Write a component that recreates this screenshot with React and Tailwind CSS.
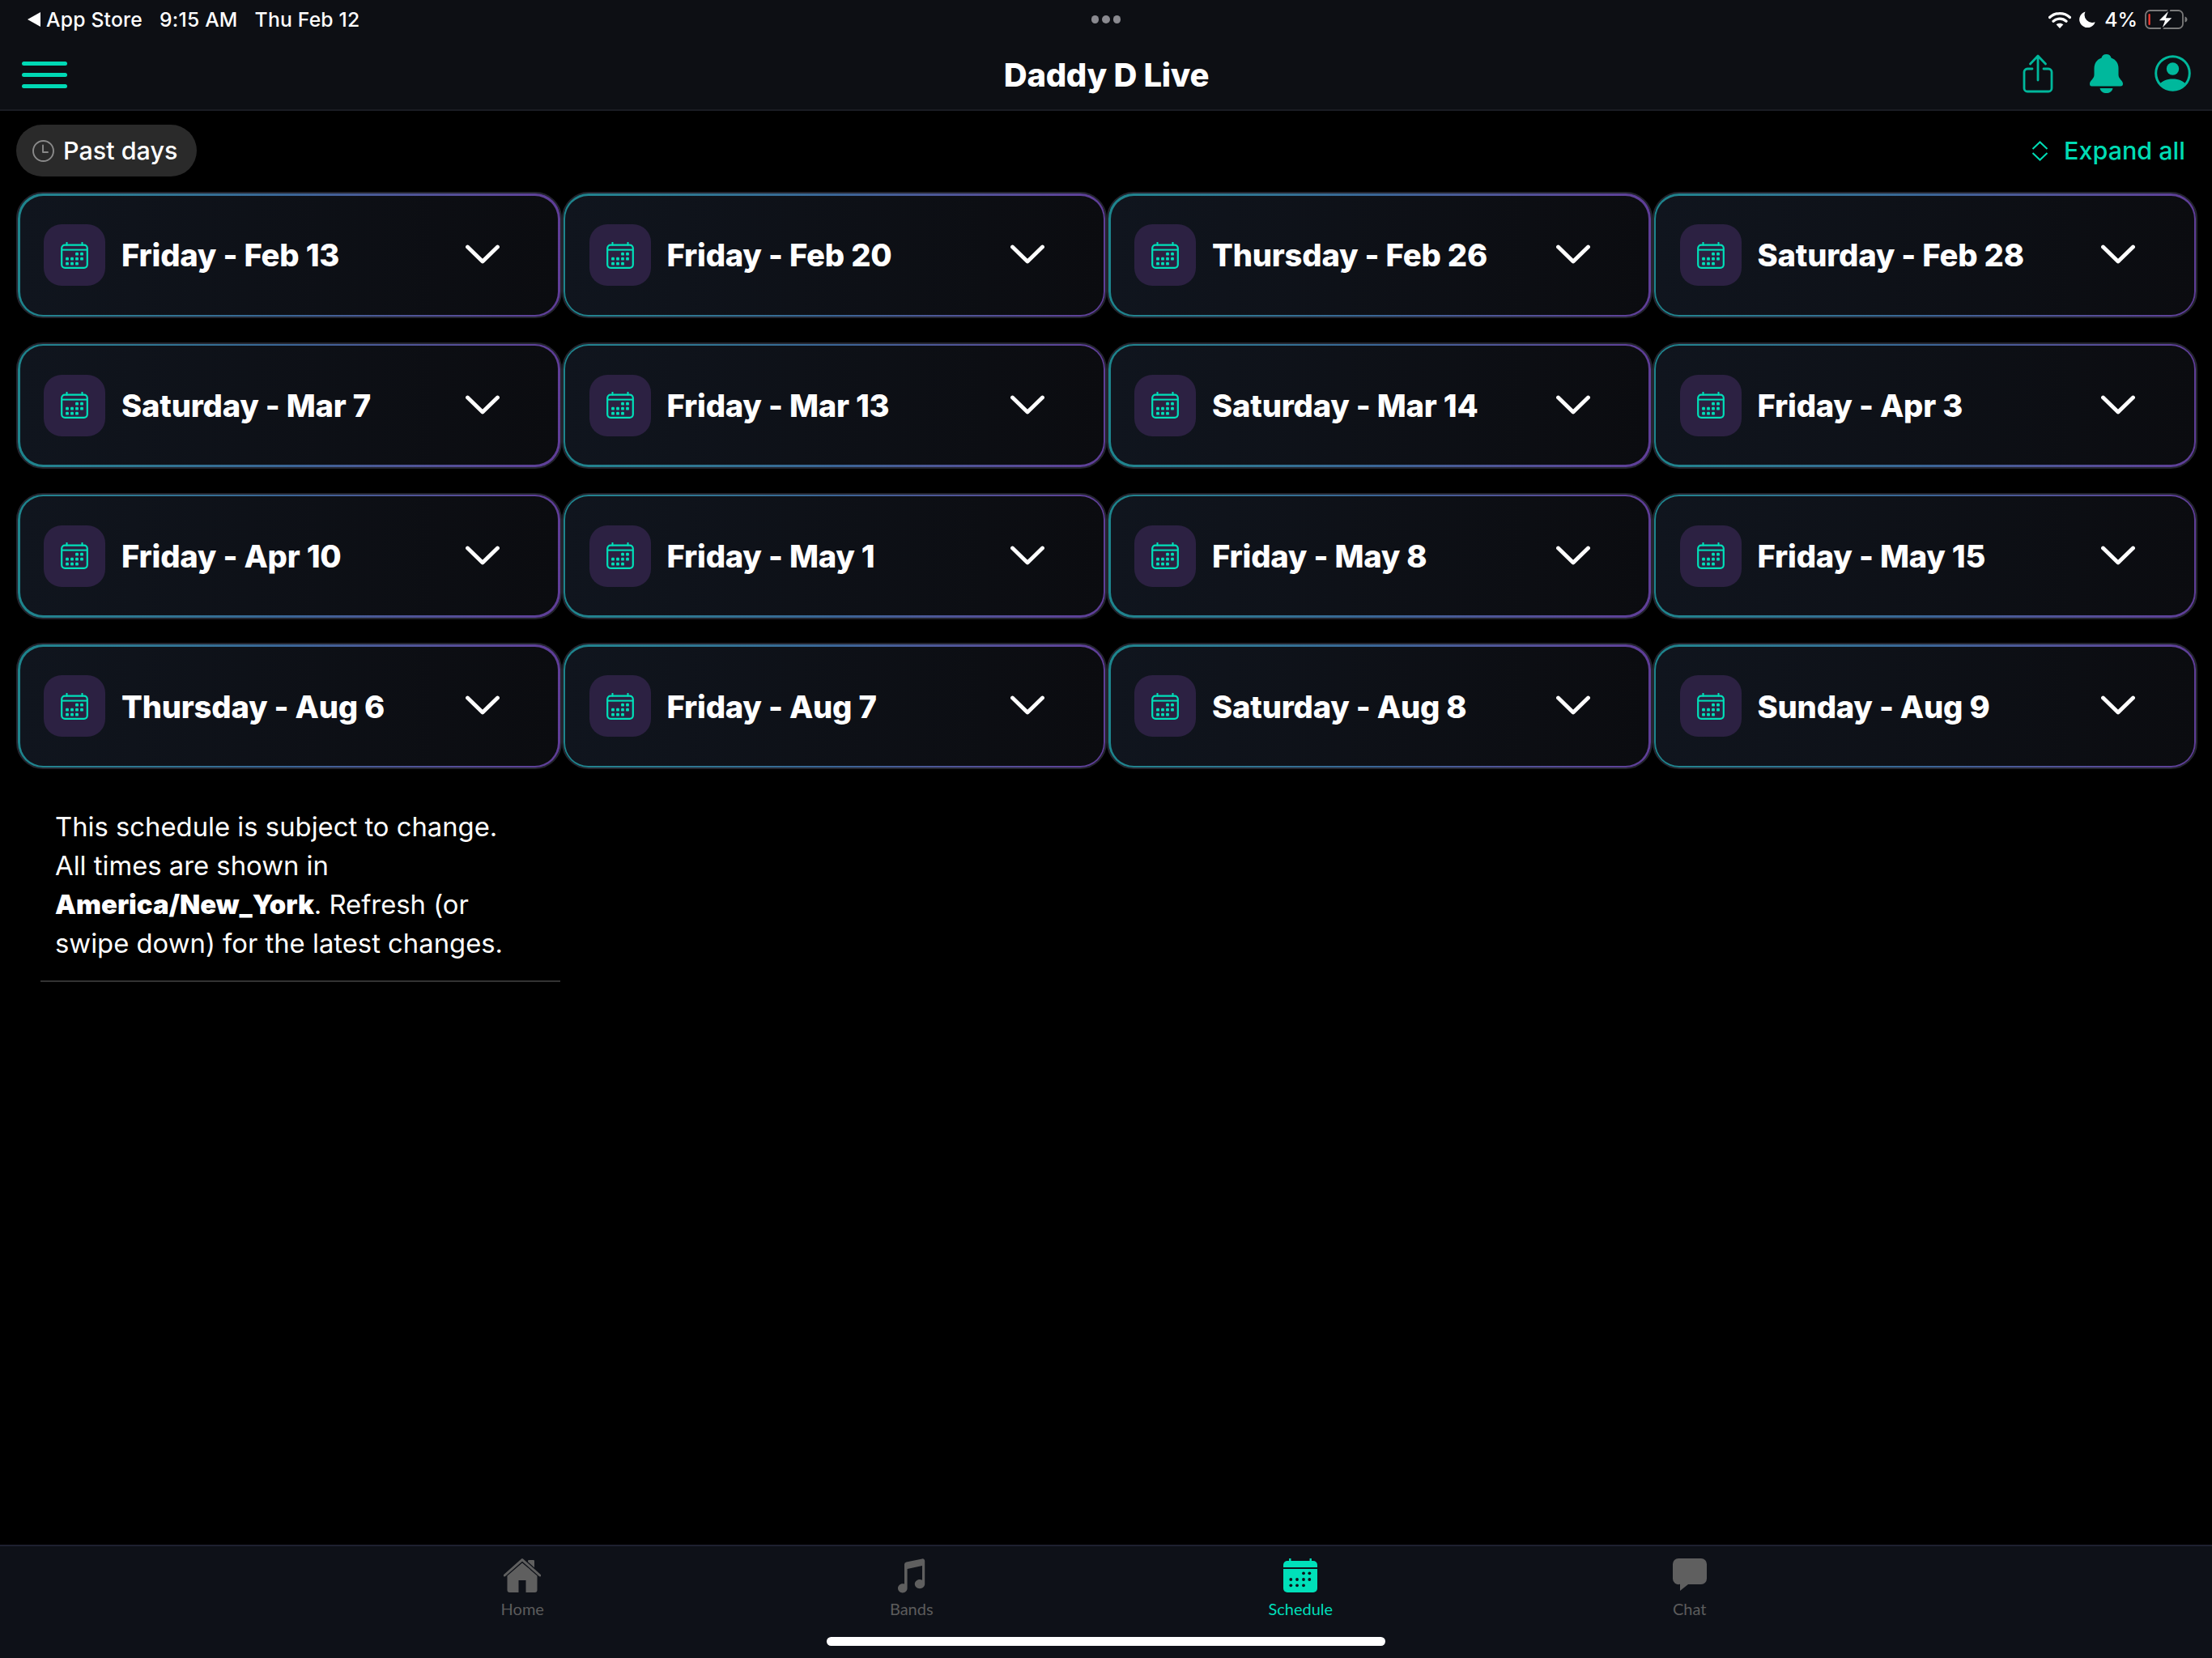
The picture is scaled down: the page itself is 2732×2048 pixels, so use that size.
const days = [
  "Friday - Feb 13", "Friday - Feb 20", "Thursday - Feb 26", "Saturday - Feb 28",
  "Saturday - Mar 7", "Friday - Mar 13", "Saturday - Mar 14", "Friday - Apr 3",
  "Friday - Apr 10", "Friday - May 1", "Friday - May 8", "Friday - May 15",
  "Thursday - Aug 6", "Friday - Aug 7", "Saturday - Aug 8", "Sunday - Aug 9",
];

function CalendarOutline() {
  const dots = [[20, 14.7], [26, 14.7], [8, 20.7], [14, 20.7], [20, 20.7], [26, 20.7], [8, 26.7], [14, 26.7], [20, 26.7]];
  return (
    <svg width="34" height="33" viewBox="0 0 34 33" fill="none" className="text-[#00e0b9]">
      <rect x="1.2" y="3.6" width="31.6" height="28.2" rx="4" stroke="currentColor" strokeWidth="2.2" />
      <path d="M1.5 9.6H32.5" stroke="currentColor" strokeWidth="2" />
      <path d="M7.5 0.5V3.5M26.5 0.5V3.5" stroke="currentColor" strokeWidth="2" strokeLinecap="round" />
      {dots.map(([x, y], i) => (
        <rect key={i} x={x - 1.9} y={y - 1.9} width="3.8" height="3.8" rx="1.2" fill="currentColor" />
      ))}
    </svg>
  );
}

function CalendarFilled() {
  const dots = [[25, 18.3], [32.3, 18.3], [9.3, 26], [17, 26], [25, 26], [32.3, 26], [9.3, 33.3], [17, 33.3], [25, 33.3]];
  return (
    <svg width="42" height="42" viewBox="0 0 42 42" className="text-[#00e0b9]">
      <path d="M8.3 0.5V4M33.7 0.5V4" stroke="currentColor" strokeWidth="2.4" strokeLinecap="round" />
      <path d="M0 11V8a5 5 0 0 1 5-5h32a5 5 0 0 1 5 5v3z" fill="currentColor" />
      <path d="M0 13h42v24a5 5 0 0 1-5 5H5a5 5 0 0 1-5-5z" fill="currentColor" />
      {dots.map(([x, y], i) => (
        <circle key={i} cx={x} cy={y} r="1.9" fill="#0e1118" />
      ))}
    </svg>
  );
}

function HomeIcon() {
  return (
    <svg width="46" height="42" viewBox="0 0 46 42" className="text-[#5f5f5f]">
      <rect x="30" y="2" width="8" height="12" rx="1.2" fill="currentColor" />
      <path d="M1.2 21L23 1.6 44.8 21" fill="none" stroke="#0e1118" strokeWidth="5.5" />
      <path d="M1.2 21L23 1.6 44.8 21" fill="none" stroke="currentColor" strokeWidth="3" strokeLinecap="round" strokeLinejoin="round" />
      <path d="M4.5 21.5L23 5.5l18.5 16V39a3 3 0 0 1-3 3H27.5V27h-9v15H7.5a3 3 0 0 1-3-3z" fill="currentColor" />
    </svg>
  );
}

function MusicIcon() {
  return (
    <svg width="34" height="43" viewBox="0 0 34 43" className="text-[#5f5f5f]">
      <path
        d="M8 7.5a3 3 0 0 1 2.4-2.9L30 .4a2.6 2.6 0 0 1 3.2 2.5V31.6c0 3.1-2.8 5.6-6.2 5.6s-6.2-2.5-6.2-5.6 2.8-5.6 6.2-5.6c1.1 0 2.1.3 3 .7V9L11.6 13V36.8c0 3.1-2.6 5.6-5.8 5.6S0 39.9 0 36.8s2.6-5.6 5.8-5.6c.8 0 1.5.1 2.2.4z"
        fill="currentColor"
      />
    </svg>
  );
}

function ChatIcon() {
  return (
    <svg width="42" height="40" viewBox="0 0 42 40" className="text-[#5f5f5f]">
      <path d="M7 0h28a7 7 0 0 1 7 7v18a7 7 0 0 1-7 7H19L9 40v-8.2A7 7 0 0 1 0 25V7a7 7 0 0 1 7-7z" fill="currentColor" />
    </svg>
  );
}

function Card({ label }) {
  return (
    <div className="rounded-[33px] border-2 border-[#24252f] h-[156px]">
      <div className="h-full rounded-[31px] p-[2.5px] bg-linear-to-r from-[#1d858d] via-[#3a6596] to-[#5f3d98]">
        <div className="h-full rounded-[28.5px] bg-linear-to-r from-[#10151e] to-[#0b0c10] flex items-center pl-[29.5px] pr-[72.5px]">
          <div className="w-[76px] h-[76px] rounded-[22px] bg-[#2c2142] flex items-center justify-center shrink-0">
            <CalendarOutline />
          </div>
          <span className="ml-[20px] mt-[1px] flex-1 text-white text-[38.2px] font-extrabold tracking-[-0.2px] leading-none">{label}</span>
          <svg width="42" height="24" viewBox="0 0 42 24" fill="none" className="-mt-[2px]">
            <path d="M2.5 3L21 21 39.5 3" stroke="white" strokeWidth="4.8" strokeLinecap="round" strokeLinejoin="round" />
          </svg>
        </div>
      </div>
    </div>
  );
}

function Tab({ label, active, children }) {
  return (
    <div className="flex flex-col items-center">
      <div className="h-[43px] flex items-start justify-center">{children}</div>
      <span className={`mt-[6px] text-[20px] leading-[26px] font-['Lato',sans-serif] ${active ? "text-[#00dfb8]" : "text-[#5c5c5c]"}`}>{label}</span>
    </div>
  );
}

export default function App() {
  return (
    <div className="relative h-[2048px] flex flex-col bg-black text-white font-['Inter',sans-serif] overflow-hidden">
      <header className="bg-[#0d0f14] border-b-2 border-[#1a1c23] h-[137px] shrink-0">
        <div className="h-[48px] flex items-center px-[33px] pr-[30px] text-[24.7px] font-medium leading-none tracking-[0.2px]">
          <div className="flex-1 flex items-center">
            <svg width="18" height="20" viewBox="0 0 18 20" className="mr-[6px]"><path d="M17 1v18L1 10z" fill="white" /></svg>
            <span>App Store</span>
            <span className="ml-[21px]">9:15 AM</span>
            <span className="ml-[21px]">Thu Feb 12</span>
          </div>
          <div className="flex gap-[4px] -ml-[3px]">
            <span className="w-[9.5px] h-[9.5px] rounded-full bg-[#8a8a90]" />
            <span className="w-[9.5px] h-[9.5px] rounded-full bg-[#8a8a90]" />
            <span className="w-[9.5px] h-[9.5px] rounded-full bg-[#8a8a90]" />
          </div>
          <div className="flex-1 flex items-center justify-end">
            <svg width="28" height="21" viewBox="0 0 28 21" fill="none">
              <path d="M1.5 7.5C8.5 1 19.5 1 26.500 7.5" stroke="white" strokeWidth="3.2" strokeLinecap="round" />
              <path d="M6 12.2C10.600 8.2 17.400 8.2 22 12.2" stroke="white" strokeWidth="3.2" strokeLinecap="round" />
              <path d="M14 21L9.600 16.300C12 14.200 16 14.200 18.400 16.300z" fill="white" />
            </svg>
            <svg width="20" height="20" viewBox="0 0 20 20" className="ml-[10px]">
              <path d="M7.500 0.500A10 10 0 1 0 19.700 13.200 9.500 9.500 0 0 1 7.500 0.500z" fill="white" />
            </svg>
            <span className="ml-[11px] tracking-normal">4%</span>
            <svg width="53" height="26" viewBox="0 0 53 26" fill="none" className="ml-[9px]">
              <rect x="1" y="2" width="46" height="22" rx="5.500" stroke="#7a7a7a" strokeWidth="1.800" />
              <path d="M49.500 9.500c2 .5 3 2 3 3.500s-1 3-3 3.500z" fill="#7a7a7a" />
              <rect x="4.500" y="6" width="2.200" height="14" rx="1" fill="#ff3b30" />
              <path d="M31 0L16 15h8l-4 11L35 10.500h-8z" fill="white" stroke="#0d0f14" strokeWidth="1.500" />
            </svg>
          </div>
        </div>
        <div className="h-[87px] flex items-center pl-[27px] pr-[26px]">
          <div className="flex-1">
            <div className="w-[56px] flex flex-col gap-[9px] mt-[1px]">
              <span className="h-[5px] rounded-full bg-[#00d9b5]" />
              <span className="h-[5px] rounded-full bg-[#00d9b5]" />
              <span className="h-[5px] rounded-full bg-[#00d9b5]" />
            </div>
          </div>
          <h1 className="text-[40px] font-extrabold tracking-[-0.3px] leading-none mt-[2px]">Daddy D Live</h1>
          <div className="flex-1 flex items-center justify-end -mt-[2px] text-[#00b89c]">
            <svg width="38" height="48" viewBox="0 0 38 48" fill="none">
              <path d="M12 18H6a4 4 0 0 0-4 4V42a4 4 0 0 0 4 4H32a4 4 0 0 0 4-4V22a4 4 0 0 0-4-4H26" stroke="currentColor" strokeWidth="2.800" strokeLinecap="round" />
              <path d="M19 2.500V32M9.500 12L19 2l9.500 10" stroke="currentColor" strokeWidth="2.800" strokeLinecap="round" strokeLinejoin="round" />
            </svg>
            <svg width="41" height="48" viewBox="0 0 41 48" className="ml-[45px]">
              <path d="M20.500 0c3.500 0 5.500 2 6 4.500 6 2 9 7 9 13v8c0 5 5.500 7 5.500 11 0 2-1 3-3 3H2.500c-2 0-2.500-1-2.500-3 0-4 5.500-6 5.500-11v-8c0-6 3-11 9-13 .5-2.500 2.500-4.500 6-4.500z" fill="currentColor" />
              <path d="M12.500 42h16c-1 4-4 6-8 6s-7-2-8-6z" fill="currentColor" />
            </svg>
            <svg width="45" height="45" viewBox="0 0 45 45" fill="none" className="ml-[39px]">
              <circle cx="22.500" cy="22.500" r="20.800" stroke="currentColor" strokeWidth="3" />
              <circle cx="22.500" cy="17" r="7.700" fill="currentColor" />
              <path d="M6.500 36C9.500 32 15 29.500 22.500 29.500S35.500 32 38.500 36A20.800 20.800 0 0 1 22.500 43.500 20.800 20.800 0 0 1 6.500 36z" fill="currentColor" />
            </svg>
          </div>
        </div>
      </header>

      <main className="flex-1 pl-[20px] pr-[18px]">
        <div className="flex items-center justify-between mt-[17px] pr-[15px]">
          <div className="h-[64px] w-[223px] rounded-full bg-[#2a2a2a] flex items-center pl-[20px]">
            <svg width="27" height="27" viewBox="0 0 27 27" fill="none">
              <circle cx="13.500" cy="13.500" r="12.500" stroke="#8a8a8a" strokeWidth="1.900" />
              <path d="M13 6.500V15H19" stroke="#8a8a8a" strokeWidth="1.900" strokeLinecap="round" strokeLinejoin="round" />
            </svg>
            <span className="ml-[11px] text-[30.5px] font-medium leading-none">Past days</span>
          </div>
          <div className="flex items-center text-[#00dcb4]">
            <svg width="21" height="25" viewBox="0 0 21 25" fill="none">
              <path d="M1.500 10L10.500 1.500 19.500 10M1.500 15L10.500 23.500 19.500 15" stroke="currentColor" strokeWidth="2" />
            </svg>
            <span className="ml-[19px] text-[30.5px] font-medium leading-none">Expand all</span>
          </div>
        </div>

        <div className="grid grid-cols-4 gap-y-[29.8px] mt-[19px]">
          {days.map((d) => (
            <Card key={d} label={d} />
          ))}
        </div>

        <div className="ml-[30px] w-[642px] mt-[48px] pl-[18px] pr-[49px] pb-[21px] border-b-2 border-[#333333] text-[32.8px] leading-[47.8px] text-white">
          This schedule is subject to change. All times are shown in <strong className="font-black">America/New_York</strong>. Refresh (or swipe down) for the latest changes.
        </div>
      </main>

      <footer className="h-[140px] shrink-0 bg-[#0e1118] border-t-2 border-[#1e2030] pt-[15px]">
        <div className="w-[1922px] mx-auto grid grid-cols-4">
          <Tab label="Home"><HomeIcon /></Tab>
          <Tab label="Bands"><MusicIcon /></Tab>
          <Tab label="Schedule" active><CalendarFilled /></Tab>
          <Tab label="Chat"><ChatIcon /></Tab>
        </div>
      </footer>
      <div className="absolute left-[1021px] bottom-[15px] w-[690px] h-[11px] rounded-full bg-white" />
    </div>
  );
}
